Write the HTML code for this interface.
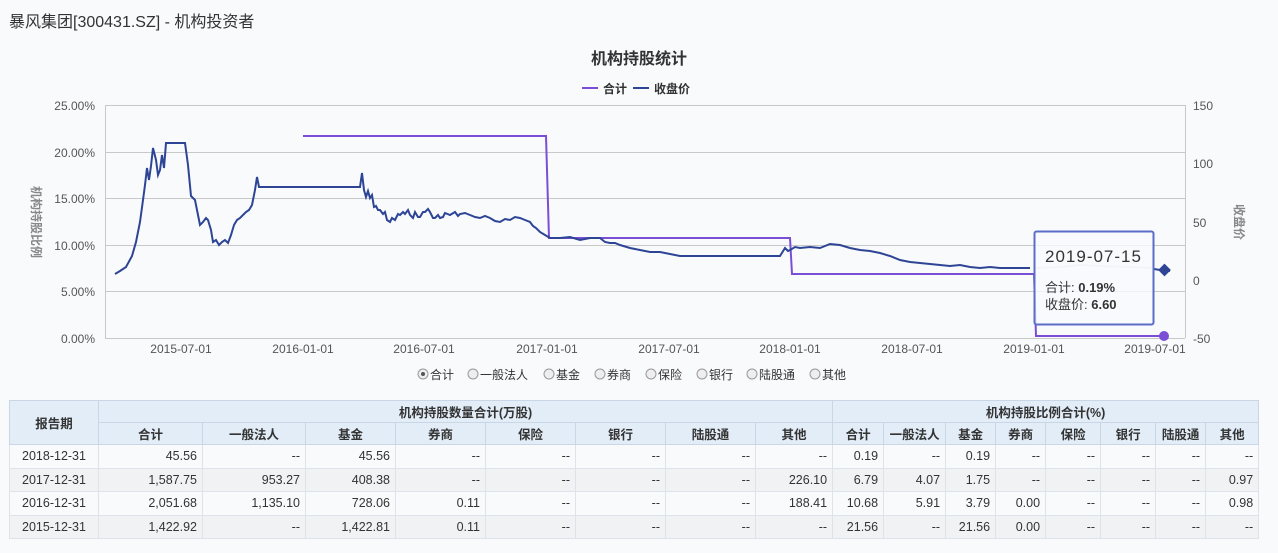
<!DOCTYPE html>
<html><head><meta charset="utf-8"><style>
body{margin:0;background:#f9fafc;font-family:"Liberation Sans","Noto Sans CJK SC",sans-serif;width:1278px;height:553px;overflow:hidden;position:relative}
.t{position:absolute;left:9px;top:8px;font-size:16px;color:#333}
table{position:absolute;left:9px;top:400px;border-collapse:collapse;font-size:12.5px;color:#333;table-layout:fixed;width:1249px}
td,th{border:1px solid #dde3ea;height:21px;padding:0 5px;text-align:right;white-space:nowrap;overflow:hidden}
td{height:22.5px}
th{background:#e3edf8;font-weight:bold;text-align:center;border-color:#c9d6e6}
table{border:1px solid #a8c0e0}
tr.g td{background:#f1f2f4}
td.d{text-align:center}
</style></head><body>
<div class="t">暴风集团[300431.SZ] - 机构投资者</div>
<svg width="1278" height="395" style="position:absolute;left:0;top:0" font-family="Liberation Sans,Noto Sans CJK SC,sans-serif">
<text x="639" y="64" text-anchor="middle" font-size="16" font-weight="bold" fill="#333">机构持股统计</text>
<line x1="582" y1="88" x2="598" y2="88" stroke="#7a4fd6" stroke-width="2"/><text x="603" y="93" font-size="12" font-weight="bold" fill="#333">合计</text>
<line x1="633" y1="88" x2="649" y2="88" stroke="#2e4596" stroke-width="2"/><text x="654" y="93" font-size="12" font-weight="bold" fill="#333">收盘价</text>
<g stroke="#c8c8c8" stroke-width="1">
<line x1="105" y1="105.5" x2="1185" y2="105.5"/><line x1="105" y1="152.5" x2="1185" y2="152.5"/><line x1="105" y1="198.5" x2="1185" y2="198.5"/><line x1="105" y1="245.5" x2="1185" y2="245.5"/><line x1="105" y1="291.5" x2="1185" y2="291.5"/><line x1="105" y1="338.5" x2="1185" y2="338.5"/>
<line x1="105.5" y1="105" x2="105.5" y2="338"/><line x1="1185.5" y1="105" x2="1185.5" y2="338"/>
</g>
<g font-size="12" fill="#555" text-anchor="end">
<text x="95" y="110">25.00%</text><text x="95" y="157">20.00%</text><text x="95" y="203">15.00%</text><text x="95" y="250">10.00%</text><text x="95" y="296">5.00%</text><text x="95" y="343">0.00%</text>
</g>
<g font-size="12" fill="#555">
<text x="1193" y="110">150</text><text x="1193" y="168">100</text><text x="1193" y="227">50</text><text x="1193" y="285">0</text><text x="1193" y="343">-50</text>
</g>
<text transform="translate(32,222) rotate(90)" font-size="12" fill="#888" text-anchor="middle" font-weight="bold">机构持股比例</text>
<text transform="translate(1235,222) rotate(90)" font-size="12" fill="#888" text-anchor="middle" font-weight="bold">收盘价</text>
<g font-size="12" fill="#555" text-anchor="middle">
<text x="181" y="353">2015-07-01</text><text x="303" y="353">2016-01-01</text><text x="424" y="353">2016-07-01</text><text x="547" y="353">2017-01-01</text><text x="669" y="353">2017-07-01</text><text x="790" y="353">2018-01-01</text><text x="912" y="353">2018-07-01</text><text x="1034" y="353">2019-01-01</text><text x="1155" y="353">2019-07-01</text>
</g>
<polyline fill="none" stroke="#7a4fd6" stroke-width="2" points="303,136 546,136 549,238 790,238 792,274 1034,274 1036,336 1165,336"/>
<polyline fill="none" stroke="#2e4596" stroke-width="2" points="115,274 120,271 126,267 132,256 136,242 140,222 143,200 145,185 147,168 149,180 151,166 153,148 156,160 158,175 160,170 162,155 164,168 166,143 185,143 188,165 191,196 193,198 195,200 198,215 200,225 203,222 206,218 208,220 211,230 213,242 216,240 219,245 222,242 225,240 228,243 231,235 234,225 237,220 240,218 243,215 246,212 249,210 252,205 255,190 257,177 259,187 360,187 362,173 364,190 366,197 368,191 370,198 372,195 374,207 376,206 378,210 380,210 383,214 385,212 387,220 390,222 392,218 395,220 398,214 400,215 403,212 405,214 408,210 410,215 413,218 415,212 418,217 420,217 423,212 425,212 428,209 430,212 433,218 435,218 438,215 440,218 443,217 445,213 450,215 455,212 458,216 460,214 465,213 470,215 475,217 480,218 485,216 490,218 495,221 500,222 505,219 510,220 515,217 520,218 525,220 530,222 533,226 536,228 540,232 545,235 550,238 560,238 570,237 580,240 590,238 600,238 605,242 610,243 615,243 620,245 630,248 640,250 650,252 660,252 670,254 680,256 780,256 785,248 788,251 790,250 795,247 800,248 810,247 820,248 830,244 840,245 850,248 860,250 870,251 880,253 890,256 900,260 910,262 920,263 930,264 940,265 950,266 960,265 970,267 980,268 990,267 1000,268 1015,268 1030,268"/>
<polyline fill="none" stroke="#d8dceb" stroke-width="2" points="1036,268 1060,267 1080,265 1100,266 1130,267 1152,268"/>
<polyline fill="none" stroke="#2e4596" stroke-width="2" points="1154,269 1160,270 1170,271"/>
<rect x="1160" y="265.5" width="9" height="9" fill="#2e4596" transform="rotate(45 1164.5 270)"/>
<circle cx="1164" cy="336" r="5" fill="#7a4fd6"/>
<rect x="1034.5" y="231.5" width="119" height="93" rx="2" fill="rgba(249,250,252,0.8)" stroke="#5a6ec8" stroke-width="2"/>
<text x="1045" y="262" font-size="17" fill="#333" letter-spacing="1">2019-07-15</text>
<text x="1045" y="292" font-size="13" fill="#333">合计: <tspan font-weight="bold">0.19%</tspan></text>
<text x="1045" y="309" font-size="13" fill="#333">收盘价: <tspan font-weight="bold">6.60</tspan></text>
<g font-size="12" fill="#333">
<circle cx="423" cy="374" r="5" fill="#eee" stroke="#999"/><circle cx="423" cy="374" r="2" fill="#555"/><text x="430" y="379">合计</text>
<circle cx="473" cy="374" r="5" fill="#eee" stroke="#999"/><text x="480" y="379">一般法人</text>
<circle cx="549" cy="374" r="5" fill="#eee" stroke="#999"/><text x="556" y="379">基金</text>
<circle cx="600" cy="374" r="5" fill="#eee" stroke="#999"/><text x="607" y="379">券商</text>
<circle cx="651" cy="374" r="5" fill="#eee" stroke="#999"/><text x="658" y="379">保险</text>
<circle cx="702" cy="374" r="5" fill="#eee" stroke="#999"/><text x="709" y="379">银行</text>
<circle cx="752" cy="374" r="5" fill="#eee" stroke="#999"/><text x="759" y="379">陆股通</text>
<circle cx="815" cy="374" r="5" fill="#eee" stroke="#999"/><text x="822" y="379">其他</text>
</g>
</svg>
<table>
<colgroup><col style="width:89px"><col style="width:104px"><col style="width:103px"><col style="width:90px"><col style="width:90px"><col style="width:90px"><col style="width:90px"><col style="width:90px"><col style="width:77px"><col style="width:51px"><col style="width:62px"><col style="width:50px"><col style="width:50px"><col style="width:55px"><col style="width:55px"><col style="width:50px"><col style="width:53px"></colgroup>
<tr><th rowspan="2">报告期</th><th colspan="8">机构持股数量合计(万股)</th><th colspan="8">机构持股比例合计(%)</th></tr>
<tr><th>合计</th><th>一般法人</th><th>基金</th><th>券商</th><th>保险</th><th>银行</th><th>陆股通</th><th>其他</th><th>合计</th><th>一般法人</th><th>基金</th><th>券商</th><th>保险</th><th>银行</th><th>陆股通</th><th>其他</th></tr>
<tr><td class="d">2018-12-31</td><td>45.56</td><td>--</td><td>45.56</td><td>--</td><td>--</td><td>--</td><td>--</td><td>--</td><td>0.19</td><td>--</td><td>0.19</td><td>--</td><td>--</td><td>--</td><td>--</td><td>--</td></tr>
<tr class="g"><td class="d">2017-12-31</td><td>1,587.75</td><td>953.27</td><td>408.38</td><td>--</td><td>--</td><td>--</td><td>--</td><td>226.10</td><td>6.79</td><td>4.07</td><td>1.75</td><td>--</td><td>--</td><td>--</td><td>--</td><td>0.97</td></tr>
<tr><td class="d">2016-12-31</td><td>2,051.68</td><td>1,135.10</td><td>728.06</td><td>0.11</td><td>--</td><td>--</td><td>--</td><td>188.41</td><td>10.68</td><td>5.91</td><td>3.79</td><td>0.00</td><td>--</td><td>--</td><td>--</td><td>0.98</td></tr>
<tr class="g"><td class="d">2015-12-31</td><td>1,422.92</td><td>--</td><td>1,422.81</td><td>0.11</td><td>--</td><td>--</td><td>--</td><td>--</td><td>21.56</td><td>--</td><td>21.56</td><td>0.00</td><td>--</td><td>--</td><td>--</td><td>--</td></tr>
</table>
</body></html>
